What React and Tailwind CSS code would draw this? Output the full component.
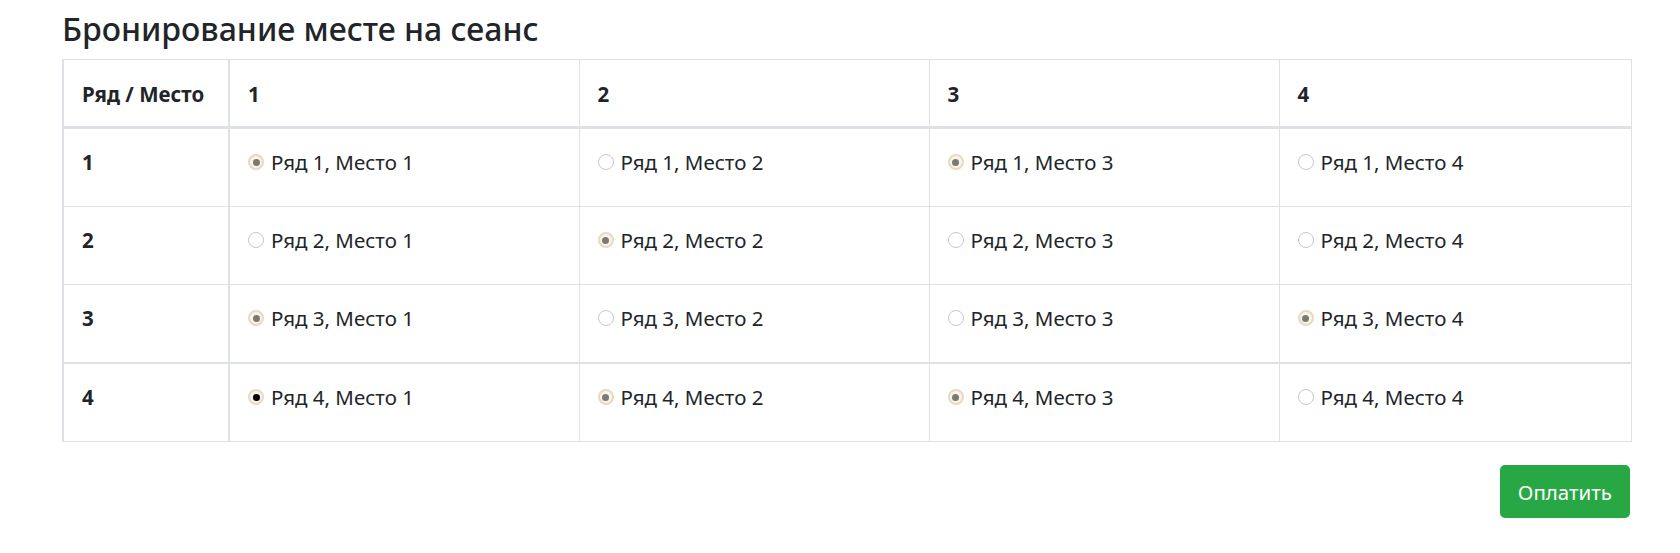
import { useState } from "react";

const ROWS = [1, 2, 3, 4];
const SEATS = [1, 2, 3, 4];

// booked seats show as disabled-checked, the user's pick shows as checked
const BOOKED = new Set(["1-1", "1-3", "2-2", "3-1", "3-4", "4-2", "4-3"]);

function Radio({ state }) {
  if (state === "empty") {
    return <span className="h-[16px] w-[16px] shrink-0 rounded-full border border-[#c8c8c8] bg-white" />;
  }
  return (
    <span className="flex h-[16px] w-[16px] shrink-0 items-center justify-center rounded-full border-2 border-[#e6dbc0] bg-[#f8f4ec]">
      <span className={`h-[7px] w-[7px] rounded-full ${state === "picked" ? "bg-black" : "bg-[#7b7a72]"}`} />
    </span>
  );
}

export default function App() {
  const [picked, setPicked] = useState("4-1");

  return (
    <div className="min-h-[553px] bg-white pl-[62px] pr-[50px] pt-[5px] text-[#212529] [font-family:'Noto_Sans','Open_Sans',sans-serif]">
      <h2 className="mb-[6px] text-[32px] font-medium leading-[48px]">Бронирование месте на сеанс</h2>
      <table className="w-[1568px] table-fixed border-collapse border-l-2 border-[#dee2e6] text-[20.5px] leading-[30px]">
        <colgroup>
          <col className="w-[166px]" />
          <col className="w-[350px]" />
          <col className="w-[350px]" />
          <col className="w-[350px]" />
          <col className="w-[352px]" />
        </colgroup>
        <thead>
          <tr>
            <th className="border border-b-[3px] border-r-2 border-[#dee2e6] px-[18px] pt-[19px] pb-[17px] text-left font-bold">
              Ряд / Место
            </th>
            {SEATS.map((s) => (
              <th key={s} className="border border-b-[3px] border-[#dee2e6] px-[18px] pt-[19px] pb-[17px] text-left font-bold">
                {s}
              </th>
            ))}
          </tr>
        </thead>
        <tbody>
          {ROWS.map((r) => (
            <tr key={r} className={r === 4 ? "border-t-2 border-[#dee2e6]" : ""}>
              <td className="border border-r-2 border-[#dee2e6] px-[18px] pt-[18px] pb-[29px] align-top font-bold">{r}</td>
              {SEATS.map((s) => {
                const key = `${r}-${s}`;
                const state = key === picked ? "picked" : BOOKED.has(key) ? "booked" : "empty";
                return (
                  <td key={s} className="border border-[#dee2e6] px-[18px] pt-[18px] pb-[29px] align-top">
                    <label className="flex cursor-pointer items-center gap-[7px]" onClick={() => !BOOKED.has(key) && setPicked(key)}>
                      <Radio state={state} />
                      <span>
                        Ряд {r}, Место {s}
                      </span>
                    </label>
                  </td>
                );
              })}
            </tr>
          ))}
        </tbody>
      </table>
      <div className="mt-[23px] flex w-[1568px] justify-end">
        <button
          type="button"
          className="h-[53px] rounded-[5px] bg-[#28a745] px-[18px] text-[20.5px] leading-[30px] text-white hover:bg-[#218838]"
        >
          Оплатить
        </button>
      </div>
    </div>
  );
}
